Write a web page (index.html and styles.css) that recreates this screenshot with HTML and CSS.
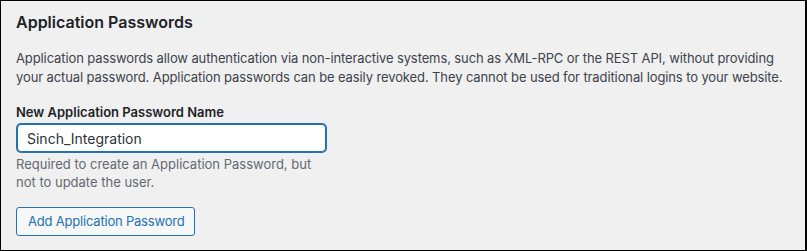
FILE: index.html
```html
<!DOCTYPE html>
<html>
<head>
<meta charset="utf-8">
<link rel="stylesheet" href="styles.css">
</head>
<body>
<div class="frame">
  <h2 class="title">Application Passwords</h2>
  <p class="intro">Application passwords allow authentication via non-interactive systems, such as XML-RPC or the REST API, without providing your actual password. Application passwords can be easily revoked. They cannot be used for traditional logins to your website.</p>
  <div class="field">
    <label class="label" for="name">New Application Password Name</label>
    <input class="input" id="name" type="text" value="Sinch_Integration">
    <p class="desc">Required to create an Application Password, but<br>not to update the user.</p>
  </div>
  <button class="btn" type="button">Add Application Password</button>
</div>
</body>
</html>
```
FILE: styles.css
```css
html, body {
  margin: 0;
  padding: 0;
  background: #f0f0f1;
}
.frame {
  box-sizing: border-box;
  width: 807px;
  height: 251px;
  border-top: 1px solid #000;
  border-left: 1px solid #000;
  border-right: 2px solid #000;
  border-bottom: 1px solid #000;
  padding: 0 14px 0 15px;
  font-family: Inter, "Liberation Sans", sans-serif;
  font-size: 13px;
  color: #1d2327;
  overflow: hidden;
}
.title {
  margin: 9px 0 0;
  font-size: 16px;
  font-weight: 600;
  line-height: 24px;
}
.intro {
  margin: 15px 0 0;
  line-height: 19px;
  letter-spacing: -0.11px;
  color: #3c434a;
}
.field {
  margin-top: 16px;
  display: flex;
  flex-direction: column;
  align-items: flex-start;
}
.label {
  font-weight: 600;
  line-height: 18px;
}
.input {
  box-sizing: border-box;
  margin: 3px 0 0 1px;
  width: 309px;
  height: 28px;
  border: 1px solid #2271b1;
  border-radius: 4px;
  box-shadow: 0 0 0 1px #2271b1;
  padding: 0 9px;
  font-family: inherit;
  font-size: 14px;
  color: #2c3338;
  background: #fff;
  outline: none;
}
.desc {
  margin: 3px 0 0;
  line-height: 18px;
  color: #646970;
}
.btn {
  display: block;
  margin-top: 16px;
  box-sizing: border-box;
  height: 29px;
  padding: 0 10px 0 11px;
  border: 1px solid #2271b1;
  border-radius: 3px;
  background: #f6f7f7;
  color: #2271b1;
  font-family: inherit;
  font-size: 13px;
  letter-spacing: -0.2px;
  line-height: 27px;
}
```
